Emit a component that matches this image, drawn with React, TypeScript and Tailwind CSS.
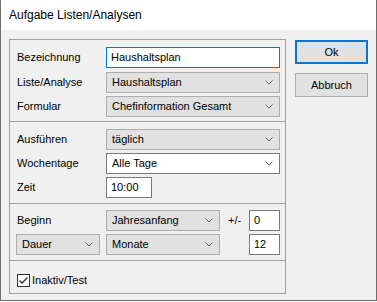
import React from "react";

const Chevron = () => (
  <svg width="8" height="5" viewBox="0 0 8 5" className="shrink-0">
    <path d="M0.5 0.5 L4 4 L7.5 0.5" fill="none" stroke="#606060" strokeWidth="1" />
  </svg>
);

const Select = ({ text, w, white }: { text: string; w: string; white?: boolean }) => (
  <div
    className={`${w} h-[21px] flex items-center justify-between pl-[5px] pr-[6px] border ${
      white ? "bg-white border-[#7a7a7a]" : "bg-[#e1e1e1] border-[#adadad]"
    }`}
  >
    <span>{text}</span>
    <Chevron />
  </div>
);

const Input = ({ text, w, focus }: { text: string; w: string; focus?: boolean }) => (
  <div
    className={`${w} h-[21px] flex items-center pl-[4px] bg-white border ${
      focus ? "border-[#0078d7]" : "border-[#7a7a7a]"
    }`}
  >
    {text}
  </div>
);

const Row = ({ label, children }: { label: string; children: React.ReactNode }) => (
  <div className="flex items-center">
    <div className="w-[89px]">{label}</div>
    {children}
  </div>
);

export default function App() {
  return (
    <div
      className="w-[377px] h-[301px] flex flex-col border-l border-r border-b border-[#6e6e6e] bg-[#f0f0f0] text-[11px] text-black"
      style={{ fontFamily: '"Liberation Sans", Arial, sans-serif' }}
    >
      <div className="h-[30px] bg-white flex items-center pl-[8px] text-[12px] pb-[1px]">
        Aufgabe Listen/Analysen
      </div>
      <div className="flex flex-1 pl-[8px]">
        <div className="w-[277px] mt-[9px] flex flex-col">
          <div className="border border-[#a0a0a0] pt-[7px] pb-[4px] pl-[7px] pr-[5px] flex flex-col gap-[3.5px]">
            <Row label="Bezeichnung">
              <Input text="Haushaltsplan" w="w-[174px]" focus />
            </Row>
            <Row label="Liste/Analyse">
              <Select text="Haushaltsplan" w="w-[174px]" />
            </Row>
            <Row label="Formular">
              <Select text="Chefinformation Gesamt" w="w-[174px]" />
            </Row>
          </div>
          <div className="border border-t-0 border-[#a0a0a0] pt-[7px] pb-[5px] pl-[7px] pr-[5px] flex flex-col gap-[3px]">
            <Row label="Ausführen">
              <Select text="täglich" w="w-[174px]" />
            </Row>
            <Row label="Wochentage">
              <Select text="Alle Tage" w="w-[174px]" white />
            </Row>
            <Row label="Zeit">
              <Input text="10:00" w="w-[46px]" />
            </Row>
          </div>
          <div className="border border-t-0 border-[#a0a0a0] pt-[6px] pb-[5px] pl-[6px] pr-[5px] flex flex-col gap-[3px]">
            <div className="flex items-center">
              <div className="w-[90px] pl-[1px]">Beginn</div>
              <Select text="Jahresanfang" w="w-[114px]" />
              <div className="w-[29px] pl-[8px]">+/-</div>
              <Input text="0" w="w-[31px]" />
            </div>
            <div className="flex items-center">
              <div className="w-[90px]">
                <Select text="Dauer" w="w-[84px]" />
              </div>
              <Select text="Monate" w="w-[114px]" />
              <div className="w-[29px]" />
              <Input text="12" w="w-[31px]" />
            </div>
          </div>
          <div className="h-[33px] border border-t-0 border-[#a0a0a0] pl-[7px] flex items-center pt-[6px]">
            <div className="w-[13px] h-[13px] bg-white border border-[#333333] flex items-center justify-center">
              <svg width="11" height="11" viewBox="0 0 11 11">
                <path d="M1.5 5.5 L4 8 L9.5 2.5" fill="none" stroke="#333333" strokeWidth="1.4" />
              </svg>
            </div>
            <span className="ml-[2px]">Inaktiv/Test</span>
          </div>
        </div>
        <div className="ml-[9px] mt-[10px] flex flex-col gap-[9px]">
          <div className="w-[73px] h-[24px] border-2 border-[#0078d7] bg-[#e1e1e1] flex items-center justify-center">
            Ok
          </div>
          <div className="w-[73px] h-[24px] border border-[#adadad] bg-[#e1e1e1] flex items-center justify-center">
            Abbruch
          </div>
        </div>
      </div>
    </div>
  );
}
